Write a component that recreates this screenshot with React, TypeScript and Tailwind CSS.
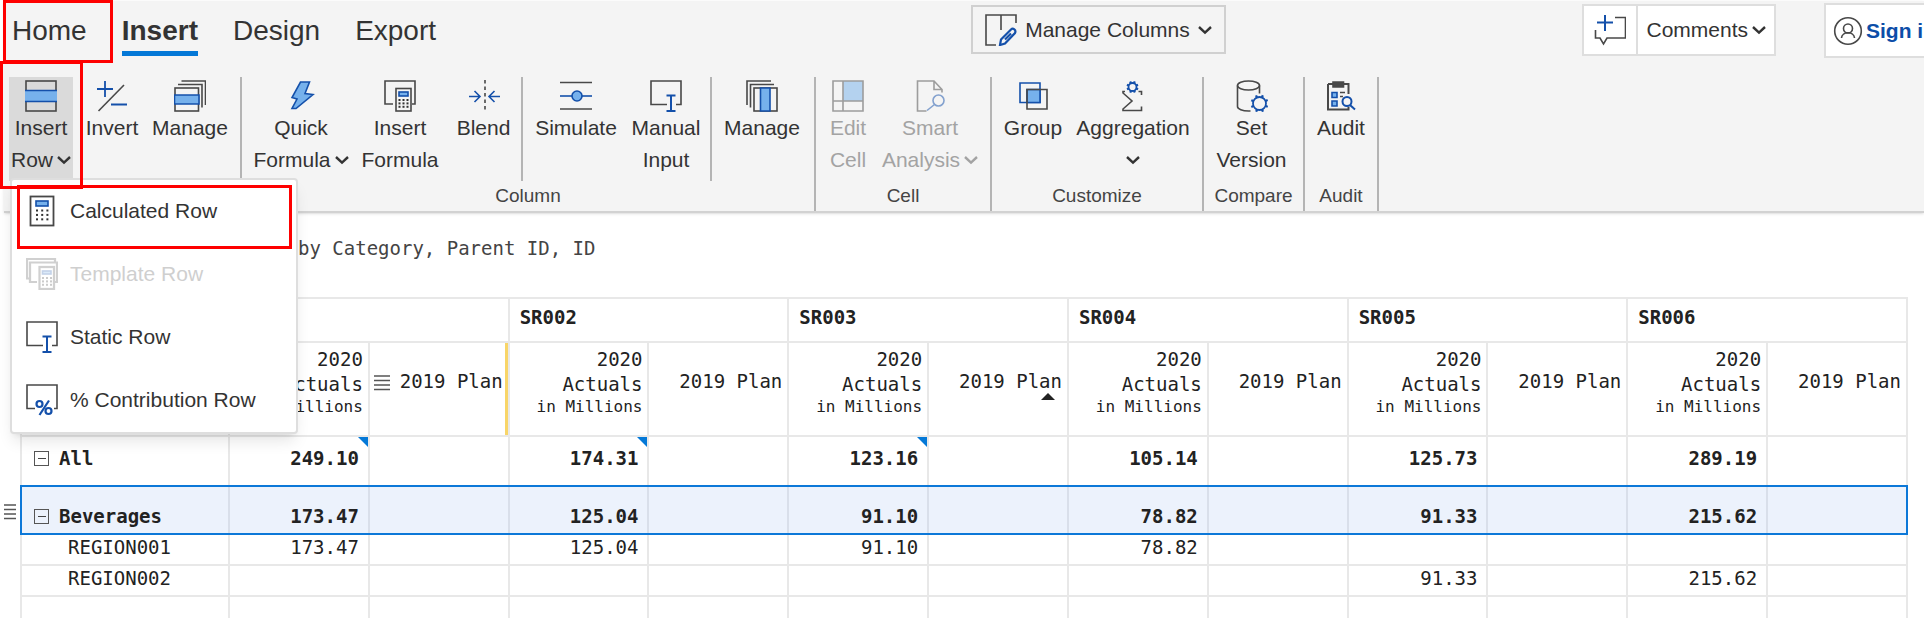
import type { ReactNode } from "react";

const DARK = "#484848";
const BLUE = "#1450aa";
const SKY = "#76b1ec";

function Icon({ children, faded = false }: { children: ReactNode; faded?: boolean }) {
  return (
    <svg
      width="32"
      height="32"
      viewBox="0 0 32 32"
      fill="none"
      stroke={DARK}
      strokeWidth="1.6"
      aria-hidden="true"
      className={faded ? "shrink-0 opacity-50" : "shrink-0"}
    >
      {children}
    </svg>
  );
}

function Chevron() {
  return (
    <svg width="14" height="10" viewBox="0 0 14 10" fill="none" stroke="currentColor" strokeWidth="2.4" aria-hidden="true" className="shrink-0">
      <path d="M1 2l6 5.6L13 2" />
    </svg>
  );
}

function Gear({ cx, cy, r, tooth }: { cx: number; cy: number; r: number; tooth: number }) {
  const teeth = [0, 45, 90, 135, 180, 225, 270, 315];
  return (
    <g stroke={BLUE}>
      <circle cx={cx} cy={cy} r={r} strokeWidth="1.8" />
      {teeth.map((a) => (
        <path key={a} strokeWidth="2.2" transform={`rotate(${a + 22} ${cx} ${cy})`} d={`M${cx} ${cy - r}v${-tooth}`} />
      ))}
    </g>
  );
}

function Keys({ x, y, step }: { x: number; y: number; step: number }) {
  const grid = [0, 1, 2];
  return (
    <g fill="#333" stroke="none">
      {grid.map((r) => grid.map((c) => <rect key={`${r}${c}`} x={x + c * step} y={y + r * step * 0.85} width="2" height="2" />))}
    </g>
  );
}

const icons = {
  insertRow: (
    <Icon>
      <rect x="1" y="1" width="30" height="30" />
      <path d="M0 10.5h32v11H0z" fill={SKY} stroke="none" />
      <path d="M0 10.5h32M0 21.5h32" stroke={BLUE} />
    </Icon>
  ),
  invert: (
    <Icon>
      <path d="M1 9h16M9 1v16M15 24.500h16" stroke={BLUE} strokeWidth="1.8" />
      <path d="M2.500 31L28 5" />
    </Icon>
  ),
  manageRows: (
    <Icon>
      <rect x="1" y="8" width="23.500" height="23" />
      <path d="M0.500 15h24.500v9H0.500z" fill={SKY} stroke={BLUE} />
      <path d="M4 4.500h24v23M7.500 1H31.500v24" />
    </Icon>
  ),
  bolt: (
    <Icon>
      <path d="M15.500 2h9l-4.500 11.500 8 1L11 28.500H7l5-9.500-5-1.500z" fill={SKY} stroke={BLUE} />
    </Icon>
  ),
  insertFormula: (
    <Icon>
      <path d="M9 24H1V1h30v23h-3" />
      <rect x="12" y="8.500" width="15" height="22.500" />
      <rect x="15" y="12" width="9" height="4" fill={SKY} stroke={BLUE} />
      <Keys x={14.5} y={19} step={4} />
    </Icon>
  ),
  blend: (
    <Icon>
      <path d="M17 0v32" strokeDasharray="3.500 3" />
      <path d="M1 16.500h11M6.500 11l5.500 5.500L6.500 22M32 16.500H21M26.500 11L21 16.500l5.500 5.500" stroke={BLUE} />
    </Icon>
  ),
  simulate: (
    <Icon>
      <path d="M0 2.500h32M0 29h32" />
      <path d="M0 16h32" stroke={BLUE} />
      <circle cx="17" cy="16" r="5" fill={SKY} stroke={BLUE} />
    </Icon>
  ),
  manualInput: (
    <Icon>
      <path d="M17 24.500H1V1h30v23.500h-5" />
      <path d="M16.500 15.500h9M16.500 31h9M21 15.500V31" stroke={BLUE} strokeWidth="2" />
    </Icon>
  ),
  manageColumns: (
    <Icon>
      <rect x="8" y="8" width="23" height="23" />
      <path d="M14.500 8h9.500v23h-9.500z" fill={SKY} stroke={BLUE} />
      <path d="M4.500 27.500v-23H28M1 25V1h24" />
    </Icon>
  ),
  editCell: (
    <Icon faded>
      <path d="M11 1h20v20H11z" fill={SKY} stroke="none" />
      <path d="M1 1h30v30H1zM11 1v30M1 21h30" />
    </Icon>
  ),
  smart: (
    <Icon faded>
      <path d="M12.500 31H3.500V1H20l8 8.500v3M20 1v8.500h8" />
      <circle cx="24.500" cy="20.500" r="5.500" stroke={BLUE} />
      <path d="M20.500 24.500L13 30.500" stroke={BLUE} />
    </Icon>
  ),
  group: (
    <Icon>
      <path d="M3 3h20v19.500H3z" stroke={BLUE} />
      <path d="M10 9.500h13v13H10z" fill={SKY} stroke={BLUE} />
      <path d="M10 9.500h20v19.500H10z" />
    </Icon>
  ),
  aggregation: (
    <Icon>
      <path d="M8 11.500H6v1.500l9 8-9 8v1.500h18.500v-4M21.500 11.500h3V15" />
      <Gear cx={15.5} cy={7} r={4} tooth={2} />
    </Icon>
  ),
  setVersion: (
    <Icon>
      <ellipse cx="12.500" cy="5.500" rx="11" ry="4.500" />
      <path d="M1.500 5.500v21c0 2.500 5 4.500 11 4.500h2M23.500 5.500v8" />
      <Gear cx={23.5} cy={23.5} r={6.5} tooth={2.4} />
    </Icon>
  ),
  audit: (
    <Icon>
      <path d="M3 4h20.500v10M3 4v25.500h20.500V27" strokeWidth="2" />
      <path d="M8 2h10.500v5H8z" fill={DARK} />
      <path d="M7 12.500h5v5H7zM7 21h5v5H7z" fill={SKY} stroke={BLUE} />
      <path d="M15 12.500h5M15 16.500h3" />
      <circle cx="22" cy="21.500" r="4.500" stroke={BLUE} strokeWidth="2" fill="#f4f4f4" />
      <path d="M25 25l5 4.500" stroke={BLUE} strokeWidth="2" />
    </Icon>
  ),
  editColumns: (
    <Icon>
      <path d="M11 31H1V1h30v8M16 1v15" />
      <path d="M15 31l1-5.500L26 15.500c2-2 5.500 0.500 4 3.500L20 29.500zM20 25.500l6-6" stroke={BLUE} strokeWidth="2.2" />
    </Icon>
  ),
  comment: (
    <Icon>
      <path d="M3 8.500h16M11 1v16" stroke={BLUE} strokeWidth="2" />
      <path d="M21 3.500h10.500V24H13l-3.500 6-3.500-6H1.500v-8" />
    </Icon>
  ),
  user: (
    <Icon>
      <circle cx="16" cy="16" r="13.300" />
      <circle cx="16" cy="13.500" r="4.500" />
      <path d="M9.500 23c0.500-7 12.500-7 13 0" />
    </Icon>
  ),
  calculator: (
    <Icon>
      <rect x="4.500" y="1.500" width="23" height="29" strokeWidth="1.800" />
      <rect x="10" y="6" width="12" height="5" fill={SKY} stroke={BLUE} />
      <Keys x={10} y={14.5} step={5.2} />
    </Icon>
  ),
  template: (
    <span className="opacity-50">
      <Icon faded>
        <path d="M4 20.500H1V1h28v3" strokeWidth="2.2" />
        <path d="M11 24H4V4.500h27V24h-2" strokeWidth="2.2" />
        <rect x="13.500" y="9" width="14.500" height="22" strokeWidth="2.2" />
        <rect x="16.500" y="13" width="8.500" height="3" fill={SKY} stroke={BLUE} />
        <Keys x={16} y={19} step={4} />
      </Icon>
    </span>
  ),
  percent: (
    <Icon>
      <path d="M9 24.500H1V1h30v23.500h-3" />
      <g stroke={BLUE} strokeWidth="2.2">
        <circle cx="13.500" cy="20" r="3" />
        <circle cx="22.500" cy="27" r="3" />
        <path d="M23 16.500L13.500 31" />
      </g>
    </Icon>
  ),
};

type Tool = {
  icon: ReactNode;
  lines: string[];
  width: string;
  chevron?: boolean;
  disabled?: boolean;
};

function ToolButton({ icon, lines, width, chevron, disabled }: Tool) {
  return (
    <button
      type="button"
      disabled={disabled}
      className={`flex shrink-0 flex-col items-center pt-[3px] text-[21px] leading-8 whitespace-nowrap ${width} ${disabled ? "text-[#a3a3a3]" : "text-[#333]"}`}
    >
      {icon}
      {lines.map((line, i) => (
        <span key={i} className="flex min-h-8 items-center gap-1">
          {line}
          {chevron && i === lines.length - 1 && <Chevron />}
        </span>
      ))}
    </button>
  );
}

function Divider() {
  return <div className="mr-1 h-[104px] w-0.5 shrink-0 bg-[#b4b4b4]" />;
}

function Group({ label, pad, children }: { label?: string; pad: string; children: ReactNode }) {
  return (
    <section className="flex shrink-0 flex-col border-r-2 border-[#b4b4b4]">
      <div className={`flex h-[104px] ${pad}`}>{children}</div>
      {label && <div className="text-center text-[19px] leading-[30px] text-[#444]">{label}</div>}
    </section>
  );
}

const tabs = ["Home", "Insert", "Design", "Export"];

function TopBar() {
  return (
    <header className="flex h-[60px] items-start overflow-hidden">
      <nav className="flex gap-[35px] pt-2.5 pl-2 text-[28px] leading-10 text-[#333]">
        {tabs.map((t) => (
          <a
            key={t}
            href={`#${t}`}
            className={t === "Insert" ? "border-b-[5px] border-[#0478d7] font-bold" : ""}
          >
            {t}
          </a>
        ))}
      </nav>
      <div className="flex-[3]" />
      <button type="button" className="mt-1 flex h-[49px] shrink-0 items-center border-2 border-[#d0d0d0] px-3 text-[21px] text-[#333]">
        {icons.editColumns}
        <span className="mr-2 ml-2">Manage Columns</span>
        <Chevron />
      </button>
      <div className="flex-[2]" />
      <div className="mt-[3px] flex h-[52px] shrink-0 border-2 border-[#dedede] bg-white text-[21px] text-[#333]">
        <button type="button" aria-label="Add comment" className="flex items-center border-r-2 border-[#dedede] px-2.5">
          {icons.comment}
        </button>
        <button type="button" className="flex items-center gap-1 px-2">
          Comments
          <Chevron />
        </button>
      </div>
      <button type="button" className="mt-0.5 -mr-5 ml-12 flex h-[55px] shrink-0 items-center gap-0.5 border-2 border-[#dedede] bg-white px-1.5 text-[21px] font-bold whitespace-nowrap text-[#0c4da8]">
        {icons.user}
        Sign in
      </button>
    </header>
  );
}

const menu = [
  { icon: icons.calculator, label: "Calculated Row", disabled: false, marked: true },
  { icon: icons.template, label: "Template Row", disabled: true, marked: false },
  { icon: icons.manualInput, label: "Static Row", disabled: false, marked: false },
  { icon: icons.percent, label: "% Contribution Row", disabled: false, marked: false },
];

function InsertRowMenu() {
  return (
    <div role="menu" className="absolute top-[101px] left-px z-20 w-[288px] rounded-sm border-2 border-[#dedede] bg-white shadow-lg">
      {menu.map((m) => (
        <button
          key={m.label}
          type="button"
          role="menuitem"
          disabled={m.disabled}
          className={`relative flex h-[63px] w-full items-center gap-3 pb-0.5 pl-3.5 text-[21px] whitespace-nowrap ${m.disabled ? "text-[#cfcfcf]" : "text-[#333]"}`}
        >
          {m.icon}
          {m.label}
          {m.marked && <span className="absolute top-[5px] left-[5px] h-16 w-[275px] border-[3px] border-[#fe0000]" />}
        </button>
      ))}
    </div>
  );
}

function Ribbon() {
  return (
    <div className="flex h-[134px] pl-[5px]">
      <Group pad="pr-[11px]">
        <div className="relative w-16 bg-[#dadada]">
          <ToolButton icon={icons.insertRow} lines={["Insert", "Row"]} chevron width="w-16" />
          <InsertRowMenu />
          <span className="absolute -top-4 -left-[9px] z-30 h-32 w-[83px] border-[3px] border-[#fe0000]" />
        </div>
        <ToolButton icon={icons.invert} lines={["Invert"]} width="w-[78px]" />
        <ToolButton icon={icons.manageRows} lines={["Manage"]} width="w-[78px]" />
      </Group>
      <Group label="Column" pad="pl-1.5 pr-1.5">
        <ToolButton icon={icons.bolt} lines={["Quick", "Formula"]} chevron width="w-[106px]" />
        <ToolButton icon={icons.insertFormula} lines={["Insert", "Formula"]} width="w-[92px]" />
        <ToolButton icon={icons.blend} lines={["Blend"]} width="w-[75px]" />
        <Divider />
        <ToolButton icon={icons.simulate} lines={["Simulate"]} width="w-[98px]" />
        <ToolButton icon={icons.manualInput} lines={["Manual", "Input"]} width="w-[82px]" />
        <div className="w-[3px]" />
        <Divider />
        <ToolButton icon={icons.manageColumns} lines={["Manage"]} width="w-[92px]" />
      </Group>
      <Group label="Cell" pad="pl-1.5 pr-1">
        <ToolButton icon={icons.editCell} lines={["Edit", "Cell"]} disabled width="w-[52px]" />
        <ToolButton icon={icons.smart} lines={["Smart", "Analysis"]} chevron disabled width="w-[112px]" />
      </Group>
      <Group label="Customize" pad="pl-1.5 pr-1">
        <ToolButton icon={icons.group} lines={["Group"]} width="w-[70px]" />
        <ToolButton icon={icons.aggregation} lines={["Aggregation", ""]} chevron width="w-[130px]" />
      </Group>
      <Group label="Compare" pad="pl-2 pr-3">
        <ToolButton icon={icons.setVersion} lines={["Set", "Version"]} width="w-[79px]" />
      </Group>
      <Group label="Audit" pad="px-1.5">
        <ToolButton icon={icons.audit} lines={["Audit"]} width="w-[60px]" />
      </Group>
    </div>
  );
}

const series = ["SR001", "SR002", "SR003", "SR004", "SR005", "SR006"];
const all = ["249.10", "174.31", "123.16", "105.14", "125.73", "289.19"];
const beverages = ["173.47", "125.04", "91.10", "78.82", "91.33", "215.62"];
const region1 = ["173.47", "125.04", "91.10", "78.82", "", ""];
const region2 = ["", "", "", "", "91.33", "215.62"];
const blank = ["", "", "", "", "", ""];

function Grip({ className }: { className: string }) {
  return (
    <svg viewBox="0 0 16 16" preserveAspectRatio="none" stroke="#555" strokeWidth="1.500" aria-hidden="true" className={`absolute ${className}`}>
      <path d="M0 1h16M0 5.500h16M0 10h16M0 14.500h16" />
    </svg>
  );
}

function Collapse() {
  return (
    <button type="button" aria-label="Collapse" className="flex size-[15px] items-center justify-center border border-[#555]">
      <span className="h-px w-2 bg-[#444]" />
    </button>
  );
}

const cell = "border-2 border-[#e8e8e8]";

function Values({ values, className, flags = 0 }: { values: string[]; className: string; flags?: number }) {
  return (
    <>
      {values.map((v, i) => [
        <td key={`a${i}`} className={`relative pr-[9px] text-right ${className}`}>
          {v}
          {i < flags && (
            <svg width="10" height="10" viewBox="0 0 10 10" aria-hidden="true" className="absolute top-0 right-0">
              <path d="M0 0h10v10z" fill="#0478d7" />
            </svg>
          )}
        </td>,
        <td key={`p${i}`} className={className} />,
      ])}
    </>
  );
}

function DataTable() {
  return (
    <table className="w-full table-fixed border-collapse leading-[25px]">
      <colgroup>
        <col className="w-[208px]" />
        {series.map((s) => [<col key={`${s}a`} />, <col key={`${s}p`} />])}
      </colgroup>
      <thead>
        <tr className="h-[44px]">
          <th className={cell} />
          {series.map((s) => (
            <th key={s} colSpan={2} className={`pb-1.5 pl-[10px] text-left font-bold ${cell}`}>
              {s}
            </th>
          ))}
        </tr>
        <tr className="h-[94px]">
          <th className={cell} />
          {series.map((s, i) => [
            <th key={`${s}a`} className={`pr-[5px] pb-3.5 text-right font-normal whitespace-nowrap ${cell}`}>
              2020
              <br />
              Actuals
              <div className="text-[16px] leading-5">in Millions</div>
            </th>,
            <th key={`${s}p`} className={`relative pr-[5px] pb-4 text-right font-normal whitespace-nowrap ${cell}`}>
              {i === 0 && <Grip className="top-8 left-1 h-4 w-4" />}
              2019 Plan
              {i === 0 && <span className="absolute inset-y-0 right-0 w-[3px] bg-[#f8d568]" />}
              {i === 2 && (
                <svg width="14" height="7" viewBox="0 0 14 7" aria-hidden="true" className="absolute top-[50px] right-3">
                  <path d="M0 7L7 0l7 7z" fill="#222" />
                </svg>
              )}
            </th>,
          ])}
        </tr>
      </thead>
      <tbody>
        <tr className="h-[50px] font-bold">
          <th className={`pb-1.5 pl-3 text-left ${cell}`}>
            <span className="flex items-center gap-2.5">
              <Collapse />
              All
            </span>
          </th>
          <Values values={all} className={`pb-1.5 ${cell}`} flags={3} />
        </tr>
        <tr className="h-[48px] bg-[#ecf2fc] font-bold outline-2 -outline-offset-1 outline-[#0c78d8]">
          <th className="relative border-2 border-[#d9dfea] pt-3 pl-3 text-left">
            <Grip className="top-[17px] -left-[18px] h-4 w-3" />
            <span className="flex items-center gap-2.5">
              <Collapse />
              Beverages
            </span>
          </th>
          <Values values={beverages} className="border-2 border-[#d9dfea] pt-3" />
        </tr>
        <tr className="h-[31px]">
          <th className={`pb-1 pl-[46px] text-left font-normal ${cell}`}>REGION001</th>
          <Values values={region1} className={`pb-1 ${cell}`} />
        </tr>
        <tr className="h-[31px]">
          <th className={`pb-1 pl-[46px] text-left font-normal ${cell}`}>REGION002</th>
          <Values values={region2} className={`pb-1 ${cell}`} />
        </tr>
        <tr className="h-[22px]">
          <th className="border-2 border-b-0 border-[#e8e8e8]" />
          <Values values={blank} className="border-2 border-b-0 border-[#e8e8e8]" />
        </tr>
      </tbody>
    </table>
  );
}

export default function App() {
  return (
    <div className="relative overflow-hidden bg-white pt-px font-['Liberation_Sans',Arial,sans-serif]">
      <span className="absolute top-0 left-[3px] z-30 h-[63px] w-[110px] border-[3px] border-[#fe0000]" />
      <div className="relative z-10 ml-1 border-b-2 border-[#d2d2d2] bg-[#f4f4f4] shadow-sm">
        <TopBar />
        <div className="h-4" />
        <Ribbon />
      </div>
      <main className="font-['DejaVu_Sans_Mono',monospace] text-[19px] text-[#222]">
        <p className="pt-[21px] pb-[35px] pl-[298px] leading-7 text-[#444]">by Category, Parent ID, ID</p>
        <div className="pr-4 pl-5">
          <DataTable />
        </div>
      </main>
    </div>
  );
}
